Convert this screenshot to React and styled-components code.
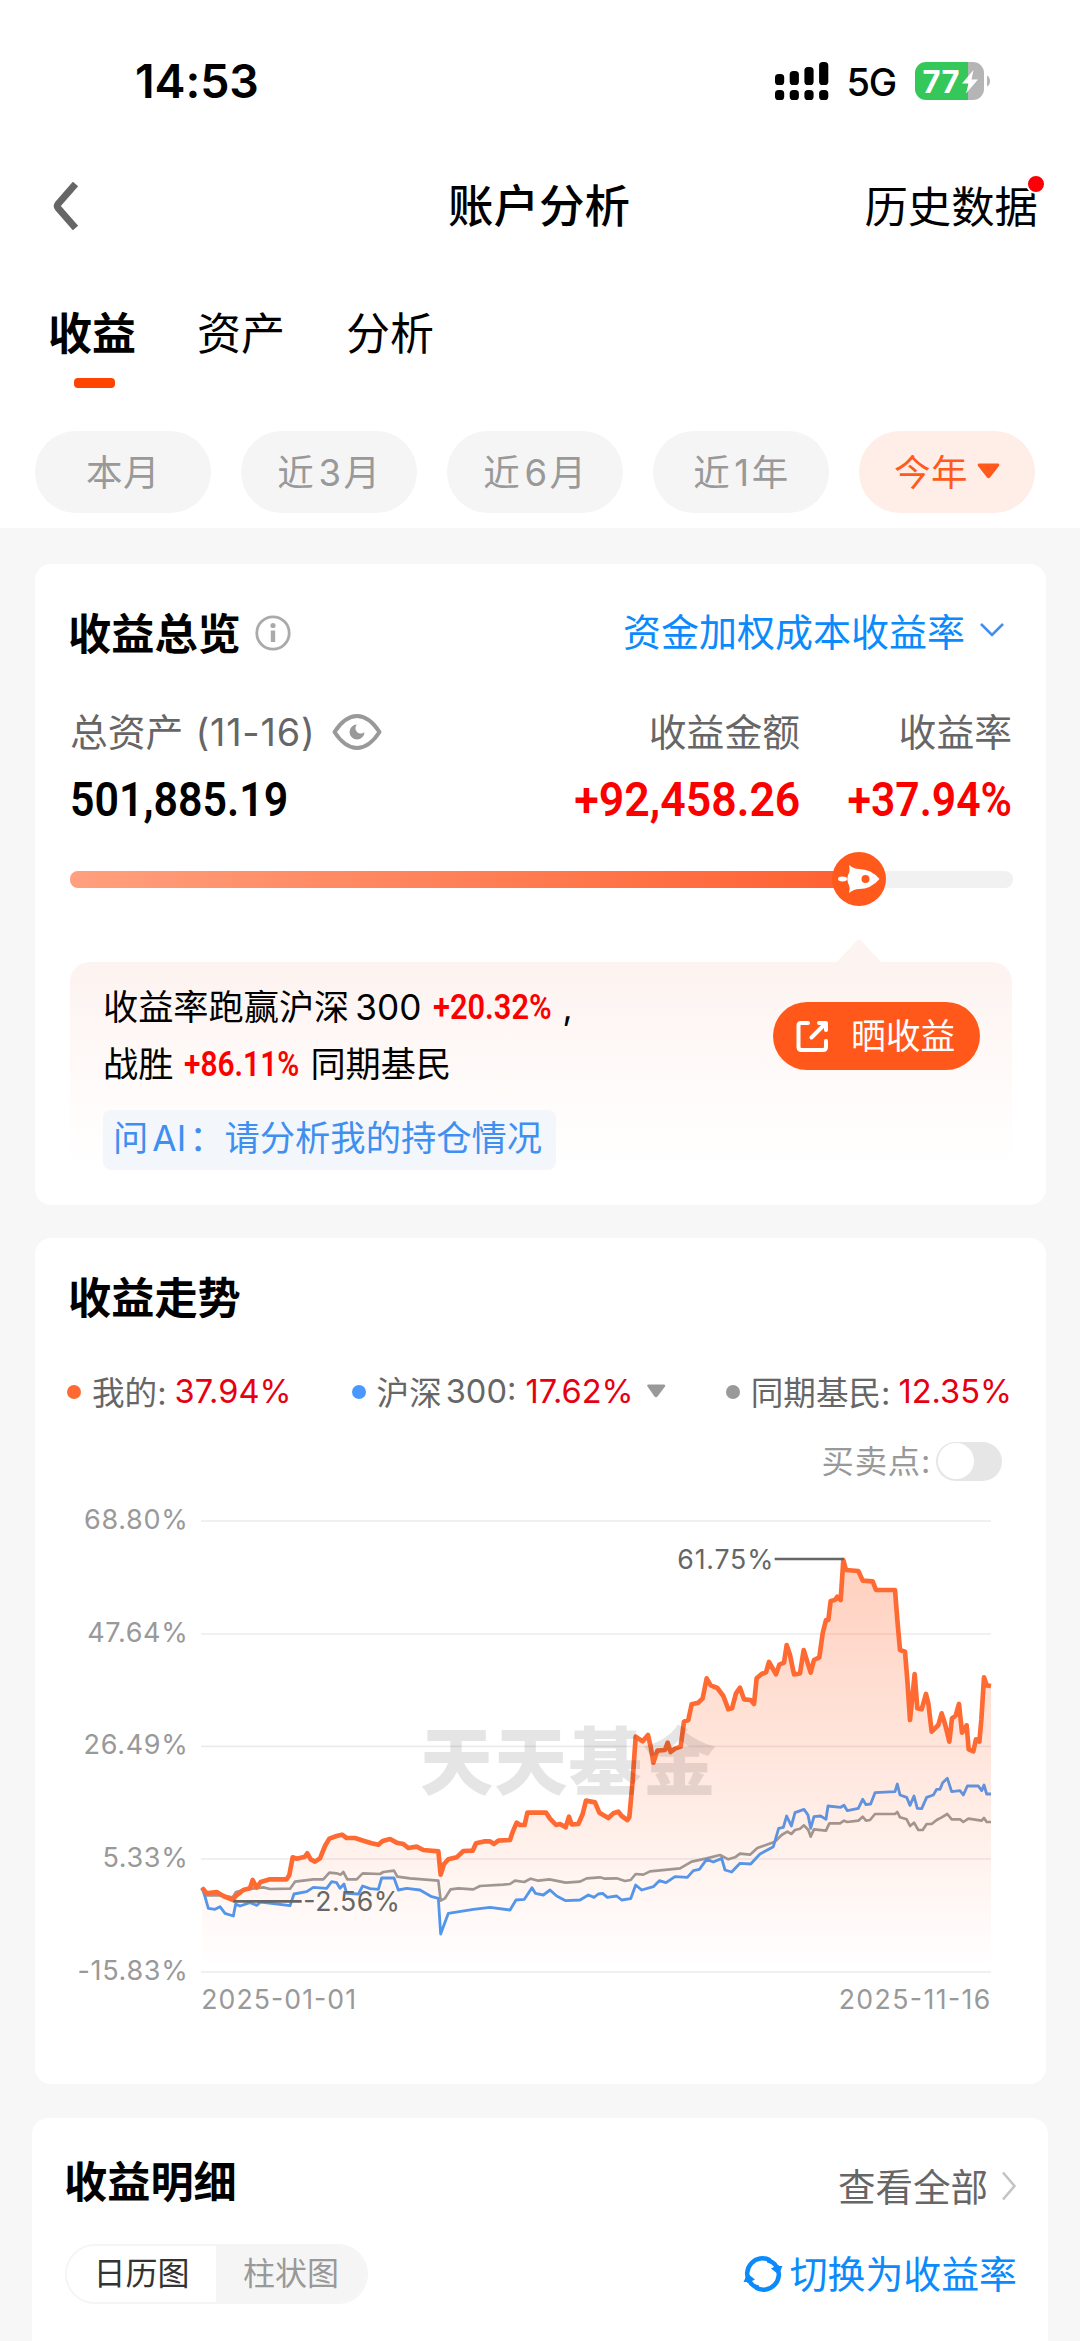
import styled, { createGlobalStyle } from "styled-components"

const GlobalStyle = createGlobalStyle`
    * {
        box-sizing: border-box;
    }
    body {
        margin: 0;
        background-color: #f7f7f7;
        font-family: Inter, "Noto Sans CJK SC", sans-serif;
        color: #000;
    }
`;

const Page = styled.div`
    width: 1080px;
    height: 2341px;
    overflow: hidden;
    background-color: #f7f7f7;
    white-space: nowrap;
`;
const Top = styled.div`
    height: 528px;
    background-color: #fff;
`;
const StatusBar = styled.div`
    height: 162px;
    padding: 0px 90px 0px 135px;
    display: flex;
    align-items: center;
    justify-content: space-between;
`;
const Time = styled.span`
    font-size: 46.5px;
    font-weight: 600;
    letter-spacing: -0.1px;
`;
const StatusRight = styled.div`
    display: flex;
    align-items: center;
`;
const Network = styled.span`
    margin: 2px 19px 0px 18px;
    font-size: 38px;
    font-weight: 500;
    letter-spacing: -1.2px;
`;
const NavBar = styled.div`
    height: 88px;
    padding: 0px 42px 0px 43px;
    display: grid;
    grid-template-columns: 1fr auto 1fr;
    align-items: center;
`;
const BackIcon = styled.svg`
    margin-left: 9px;
`;
const NavTitle = styled.h1`
    margin: 0px 3px 0px 0px;
    padding-bottom: 6px;
    font-size: 45.5px;
    font-weight: 500;
`;
const NavLink = styled.span`
    position: relative;
    justify-self: end;
    padding-bottom: 4px;
    font-size: 43.4px;
`;
const RedDot = styled.i`
    position: absolute;
    top: 1px;
    right: -8px;
    width: 20px;
    height: 20px;
    border-radius: 50%;
    border: 2px solid #fff;
    background-color: #fb0007;
`;
const Tabs = styled.div`
    height: 138px;
    padding: 40px 0px 0px 48px;
    display: flex;
    gap: 61px;
`;
const Tab = styled.div`
    display: flex;
    flex-direction: column;
    align-items: center;
    font-size: 44px;
    line-height: 88px;
    font-weight: ${props=>props.$active ? 700 : 400};
`;
const TabLine = styled.i`
    width: 41px;
    height: 10px;
    margin-left: 5px;
    border-radius: 4px;
    background-color: #ff4400;
`;
const Periods = styled.div`
    padding: 43px 0px 0px 35px;
    display: flex;
    gap: 30px;
`;
const Period = styled.div`
    width: 176px;
    height: 82px;
    padding-bottom: 3px;
    border-radius: 41px;
    display: flex;
    align-items: center;
    justify-content: center;
    gap: 9px;
    font-size: 36.5px;
    letter-spacing: 0.6px;
    color: ${props=>props.$active ? "#ff5a1c" : "#999"};
    background-color: ${props=>props.$active ? "#ffeee8" : "#f5f5f5"};
`;
const Latin = styled.span`
    margin: 0px ${props=>props.$right || 3}px 0px ${props=>props.$left || 4}px;
`;
const Card = styled.section`
    width: ${props=>props.$wide ? 1016 : 1011}px;
    height: ${props=>props.$height}px;
    margin: ${props=>props.$top}px 0px 0px ${props=>props.$wide ? 32 : 35}px;
    padding: 0px ${props=>props.$wide ? 31 : 34}px 0px ${props=>props.$wide ? 34 : 35}px;
    border-radius: 16px;
    background-color: #fff;
`;
const CardHead = styled.div`
    height: ${props=>props.$height}px;
    display: flex;
    align-items: center;
    justify-content: space-between;
`;
const CardTitle = styled.h2`
    margin: 0px 0px 0px -2px;
    padding-bottom: 5px;
    display: flex;
    align-items: center;
    gap: 14px;
    font-size: 43.2px;
    font-weight: 700;

    svg {
        margin-top: 4px;
    }
`;
const MethodLink = styled.span`
    display: flex;
    align-items: center;
    gap: 14px;
    margin-right: 7px;
    padding-bottom: 7px;
    font-size: 38px;
    color: #0b8bfb;
`;
const Stats = styled.div`
    display: flex;
    height: 134px;
`;
const Stat = styled.div`
    display: flex;
    flex-direction: column;
    flex: ${props=>props.$grow ? 1 : "none"};
    width: ${props=>props.$width ? props.$width + "px" : "auto"};
    align-items: ${props=>props.$grow ? "flex-start" : "flex-end"};
`;
const StatLabel = styled.div`
    height: 60px;
    padding-bottom: 6px;
    display: flex;
    align-items: center;
    gap: 16px;
    font-size: 37.8px;
    color: #666;

    svg {
        margin-top: 5px;
    }
`;
const DateRange = styled.span`
    margin-left: 12px;
    letter-spacing: 0.8px;
`;
const StatValue = styled.div`
    height: 74px;
    line-height: 75px;
    font-family: Roboto, sans-serif;
    font-size: 49px;
    font-weight: 600;
    color: ${props=>props.$red ? "#fc0000" : "#000"};
    transform: scaleX(${props=>props.$scale});
    transform-origin: ${props=>props.$red ? "right" : "left"};
`;
const Track = styled.div`
    height: 17px;
    margin-top: 35px;
    width: 943px;
    border-radius: 8px;
    background-color: #f1f1f1;
    position: relative;
`;
const TrackFill = styled.div`
    width: 789px;
    height: 17px;
    border-radius: 8px 0px 0px 8px;
    background-image: linear-gradient(90deg, #ffa07e, #ff6030);
`;
const Thumb = styled.svg`
    position: absolute;
    left: 762px;
    top: -19px;
`;
const Callout = styled.div`
    position: relative;
    height: 206px;
    margin-top: 74px;
    padding: 17px 32px 0px 33px;
    border-radius: 20px;
    background-image: linear-gradient(180deg, #fdf3f0, #fffdfc 78%, #fff);
    display: flex;
    justify-content: space-between;
`;
const Pointer = styled.svg`
    position: absolute;
    left: 766px;
    top: -23px;
`;
const Summary = styled.p`
    margin: 0;
    font-size: 35.2px;
    line-height: 57px;
`;
const Rate = styled.b`
    display: inline-block;
    width: ${props=>props.$width}px;
    margin: 0px 9px 0px 11px;
    font-family: Roboto, sans-serif;
    font-weight: 600;
    color: #fc0000;
    line-height: 50px;

    span {
        display: inline-block;
        transform: translateY(-1px) scaleX(${props=>props.$scale});
        transform-origin: left;
    }
`;
const AskAi = styled.div`
    display: inline-block;
    height: 60px;
    margin-top: 17px;
    padding: 0px 14px 0px 10px;
    border-radius: 8px;
    background-color: #f3f6fb;
    font-size: 35.3px;
    line-height: 57px;
    color: #3f8ff0;
`;
const ShareButton = styled.button`
    width: 207px;
    height: 68px;
    margin-top: 23px;
    padding: 0px 0px 4px 23px;
    border: none;
    border-radius: 34px;
    background-color: #ff581a;
    color: #fff;
    display: flex;
    align-items: center;
    gap: 22px;
    font-family: inherit;
    font-size: 34.8px;

    svg {
        margin-top: 4px;
    }
`;
const Legend = styled.div`
    height: 72px;
    margin-left: -3px;
    display: flex;
    align-items: center;
    justify-content: space-between;
    font-size: 32.6px;
    color: #666;
`;
const LegendItem = styled.div`
    display: flex;
    align-items: center;
    padding-bottom: 3px;
`;
const Dot = styled.i`
    width: 14px;
    height: 14px;
    margin: 3px 11px 0px 0px;
    border-radius: 50%;
    background-color: ${props=>props.color};
`;
const LegendValue = styled.span`
    margin-left: 8px;
    color: #e60012;
`;
const TradeRow = styled.div`
    height: 66px;
    padding: 0px 10px 4px 0px;
    display: flex;
    align-items: center;
    justify-content: flex-end;
    font-size: 32.3px;
    letter-spacing: 0.8px;
    color: #999;
`;
const Toggle = styled.div`
    width: 66px;
    height: 39px;
    margin: 4px 0px 0px 5px;
    padding: 1.5px;
    border-radius: 20px;
    background-color: #e6e6e6;

    i {
        display: block;
        width: 36px;
        height: 36px;
        border-radius: 50%;
        background-color: #fff;
    }
`;
const Chart = styled.svg`
    display: block;
    margin-top: 6px;
`;
const MoreLink = styled.span`
    display: flex;
    align-items: center;
    gap: 13px;
    padding-top: 6px;
    font-size: 37.5px;
    color: #666;

    svg {
        margin-top: 3px;
    }
`;
const Segment = styled.div`
    display: flex;
    width: 303px;
    height: 60px;
    margin-left: -1px;
    border: 2px solid #f5f5f5;
    border-radius: 30px;
    overflow: hidden;
`;
const SegmentItem = styled.div`
    flex: ${props=>props.$active ? "0 0 149px" : 1};
    line-height: 55px;
    text-align: center;
    font-size: 32px;
    color: ${props=>props.$active ? "#333" : "#999"};
    background-color: ${props=>props.$active ? "#fff" : "#f5f5f5"};
`;
const SwitchLink = styled.span`
    display: flex;
    align-items: center;
    gap: 7px;
    padding-bottom: 6px;
    font-size: 37.9px;
    color: #0b8bfb;

    svg {
        margin-top: 5px;
    }
`;

const signal = [73, 70, 66, 61]
const periods = [["", "本", "月"], ["3", "近", "月"], ["6", "近", "月"], ["1", "近", "年"]]
const gridLines = [
    { y: -57, label: "68.80%" },
    { y: 282, label: "47.64%" },
    { y: 619, label: "26.49%" },
    { y: 957, label: "5.33%" },
    { y: 1296, label: "-15.83%" },
]

// chart units are a third of a pixel
const mine = "36,1043 50,1060 80,1056 100,1068 130,1080 135,1070 160,1050 180,1045 188,1020 200,1043 212,1026 240,1018 290,1018 298,1005 308,952 320,956 345,950 352,940 362,958 375,965 390,955 405,918 418,896 440,888 456,884 470,894 495,894 520,902 545,910 565,914 578,903 600,897 620,908 640,912 655,924 680,920 700,930 745,934 752,1004 762,972 775,958 800,952 820,933 848,932 858,910 885,904 900,904 912,912 925,902 960,900 968,876 980,848 990,855 1004,855 1012,818 1068,818 1080,836 1098,855 1110,852 1127,862 1137,830 1145,853 1165,852 1178,822 1188,782 1215,787 1228,818 1255,834 1270,820 1285,815 1295,828 1312,840 1318,832 1328,722 1337,590 1358,604 1374,585 1382,620 1390,668 1402,632 1425,630 1433,608 1442,636 1455,626 1472,620 1482,545 1495,540 1505,493 1525,488 1538,475 1550,415 1562,436 1582,444 1600,468 1615,508 1626,505 1638,460 1650,443 1662,478 1682,480 1692,492 1700,415 1715,402 1728,397 1737,366 1758,403 1768,374 1782,368 1790,315 1800,345 1812,403 1830,400 1841,330 1862,398 1872,360 1888,352 1898,280 1908,240 1915,240 1922,183 1935,180 1942,170 1952,180 1960,60 1968,90 2005,93 2018,122 2048,124 2058,150 2115,150 2122,240 2130,330 2145,335 2152,420 2160,540 2174,402 2182,505 2195,508 2208,462 2215,490 2225,575 2245,555 2255,520 2265,552 2278,605 2286,535 2297,527 2307,492 2316,578 2330,556 2336,628 2350,634 2358,598 2368,605 2374,540 2382,412 2390,436 2403,438"
const hs300 = "36,1043 45,1070 55,1105 75,1108 90,1100 105,1120 130,1128 137,1092 150,1098 180,1088 200,1096 212,1086 300,1097 312,1062 350,1055 370,1042 410,1045 425,1025 440,1028 450,1045 462,1032 470,1060 505,1062 518,1038 540,1046 565,1048 575,1014 612,1014 625,1050 650,1045 690,1050 725,1070 745,1075 752,1182 775,1120 850,1108 900,1102 960,1110 978,1080 1003,1078 1026,1043 1036,1060 1060,1065 1080,1050 1100,1068 1127,1082 1170,1080 1195,1065 1212,1072 1225,1062 1238,1060 1252,1072 1280,1068 1295,1080 1322,1076 1337,1035 1355,1050 1390,1040 1408,1022 1428,1028 1455,1010 1492,1012 1510,992 1528,988 1550,958 1570,966 1595,955 1605,990 1625,996 1650,970 1682,972 1710,942 1750,920 1766,865 1780,862 1790,828 1804,858 1815,818 1842,808 1854,825 1862,865 1872,830 1892,828 1908,838 1914,798 1952,802 1962,796 1972,812 2005,805 2018,778 2028,794 2042,792 2055,758 2115,755 2122,732 2130,765 2150,772 2160,796 2172,768 2182,805 2195,806 2210,772 2230,765 2240,748 2250,748 2258,728 2272,715 2285,755 2310,752 2320,765 2332,738 2365,738 2375,752 2382,735 2390,762 2403,762"
const peers = "36,1043 50,1066 90,1066 128,1072 138,1056 160,1050 200,1044 220,1042 240,1047 300,1046 315,1025 370,1018 400,1018 418,998 440,1000 452,1004 460,996 472,1018 500,1018 518,1000 570,1002 580,996 612,992 622,1010 660,1015 745,1022 752,1082 765,1075 782,1048 805,1045 850,1048 870,1038 940,1034 960,1032 975,1022 1003,1026 1022,1016 1045,1022 1078,1018 1127,1028 1170,1025 1190,1015 1230,1012 1245,1016 1280,1015 1305,1023 1322,1020 1337,1002 1360,1004 1380,994 1470,985 1505,965 1550,955 1590,945 1615,958 1635,952 1650,941 1680,944 1702,924 1755,905 1775,885 1792,875 1804,882 1815,870 1830,866 1842,856 1855,870 1862,890 1872,868 1908,872 1918,850 1950,850 1962,842 1972,846 2005,842 2018,830 2028,842 2040,840 2055,822 2115,822 2122,816 2130,832 2150,838 2160,858 2172,848 2185,870 2198,870 2210,852 2225,852 2240,840 2255,832 2272,822 2285,838 2310,838 2320,846 2335,836 2375,842 2382,834 2390,846 2403,846"

const Signal = () => (
    <svg width="54" height="38" viewBox="775 61 54 38">
        {signal.map((top, i) => (
            <g key={top}>
                <rect x={775 + i * 14.7} y={top} width="9.2" height={84 - top} rx="3.6" />
                <rect x={775 + i * 14.7} y="89" width="9.2" height="10" rx="3.6" />
            </g>
        ))}
    </svg>
)

const Battery = () => (
    <svg width="75" height="38" viewBox="0 0 75 38">
        <path d="M11 0H53V38H11A11 11 0 0 1 0 27V11A11 11 0 0 1 11 0Z" fill="#34c759" />
        <path d="M53 0H58A11 11 0 0 1 69 11V27A11 11 0 0 1 58 38H53Z" fill="#b5b5b5" />
        <path d="M72 13.5Q75 15 75 19Q75 23 72 24.5Z" fill="#b5b5b5" />
        <text x="7.5" y="30.5" fontSize="31" fontWeight="700" fontFamily="Inter" textLength="37" fill="#fff">77</text>
        <path d="M58.500 8L47 21.500H53.500L51 31.500L63 17.500H56.500Z" fill="#fff" />
    </svg>
)

const EarningsChart = () => (
    <Chart width="942" height="520" viewBox="-360 -120 2826 1560" fontFamily="Inter" fontSize="80">
        <defs>
            <linearGradient id="area" gradientUnits="userSpaceOnUse" x1="0" y1="60" x2="0" y2="1280">
                <stop offset="0" stopColor="#ff6a33" stopOpacity="0.32" />
                <stop offset="1" stopColor="#ff6a33" stopOpacity="0" />
            </linearGradient>
        </defs>
        {gridLines.map((line) => (
            <g key={line.label}>
                <path d={`M33 ${line.y}H2403`} stroke="#ebebeb" strokeWidth="5" />
                <text x="-5" y={line.y + 23} textAnchor="end" fontSize="81" letterSpacing="2" fill="#999">{line.label}</text>
            </g>
        ))}
        <g fill="none" strokeLinejoin="round">
            <polyline points={peers} stroke="#999" strokeWidth="8" />
            <polyline points={hs300} stroke="#4a98f5" strokeWidth="8.500" />
            <polygon points={`36,1290 ${mine} 2403,1290`} fill="url(#area)" />
            <polyline points={mine} stroke="#ff6a33" strokeWidth="14" />
            <path d="M130 1084H335M1754 57H1962" stroke="#666" strokeWidth="8" />
        </g>
        <text x="340" y="1114" textLength="290" fill="#666">-2.56%</text>
        <text x="1462" y="87" textLength="288" fill="#666">61.75%</text>
        <text x="690" y="747" fontSize="220" fontWeight="900" textLength="888" fontFamily="'Noto Sans CJK SC'" fill="#000" fillOpacity="0.1">天天基金</text>
        <text x="34" y="1408" textLength="464" fill="#999">2025-01-01</text>
        <text x="2401" y="1408" textLength="455" textAnchor="end" fill="#999">2025-11-16</text>
    </Chart>
)

const App = () => {
  return (
    <Page>
        <GlobalStyle/>
        <Top>
            <StatusBar>
                <Time>14:53</Time>
                <StatusRight>
                    <Signal/>
                    <Network>5G</Network>
                    <Battery/>
                </StatusRight>
            </StatusBar>
            <NavBar>
                <BackIcon width="27" height="48" viewBox="0 0 27 48" fill="none" stroke="#666" strokeWidth="7">
                    <path d="M23.500 2L6 22Q4.500 24 6 26L23.500 46" strokeLinejoin="round" />
                </BackIcon>
                <NavTitle>账户分析</NavTitle>
                <NavLink>历史数据<RedDot/></NavLink>
            </NavBar>
            <Tabs>
                <Tab $active>收益<TabLine/></Tab>
                <Tab>资产</Tab>
                <Tab>分析</Tab>
            </Tabs>
            <Periods>
                {periods.map(([num, before, after]) => (
                    <Period key={before + num}>
                        <span>{before}{num && <Latin $right={2}>{num}</Latin>}{after}</span>
                    </Period>
                ))}
                <Period $active>
                    今年
                    <svg width="23" height="16" viewBox="0 0 23 16"><path d="M2 0.500H21Q23 1 22 3L13 14.500Q11.500 16 10 14.500L1 3Q0 1 2 0.500Z" fill="#ff5a1c" /></svg>
                </Period>
            </Periods>
        </Top>

        <Card $height={641} $top={36}>
            <CardHead $height={138}>
                <CardTitle>
                    收益总览
                    <svg width="36" height="36" viewBox="0 0 36 36">
                        <circle cx="18" cy="18" r="16.200" fill="none" stroke="#aaa" strokeWidth="2.800" />
                        <circle cx="18" cy="10.500" r="2.600" fill="#aaa" />
                        <path d="M18 15.500V27" stroke="#aaa" strokeWidth="4.400" />
                    </svg>
                </CardTitle>
                <MethodLink>
                    资金加权成本收益率
                    <svg width="26" height="16" viewBox="0 0 26 16" fill="none" stroke="#3f8ff0" strokeWidth="2.600"><path d="M2 2L13 13L24 2" /></svg>
                </MethodLink>
            </CardHead>
            <Stats>
                <Stat $grow>
                    <StatLabel>
                        <span>总资产<DateRange>(11-16)</DateRange></span>
                        <svg width="50" height="36" viewBox="0 0 50 36">
                            <path d="M2.500 18Q13 2 25 2T47.500 18Q37 34 25 34T2.500 18Z" fill="none" stroke="#999" strokeWidth="4" strokeLinejoin="round" />
                            <path d="M25 10.500A7.500 7.500 0 1 0 32.500 18A5 5 0 0 1 25 10.500Z" fill="#999" />
                        </svg>
                    </StatLabel>
                    <StatValue $scale={0.875}>501,885.19</StatValue>
                </Stat>
                <Stat>
                    <StatLabel>收益金额</StatLabel>
                    <StatValue $red $scale={0.91}>+92,458.26</StatValue>
                </Stat>
                <Stat $width={212}>
                    <StatLabel>收益率</StatLabel>
                    <StatValue $red $scale={0.87}>+37.94%</StatValue>
                </Stat>
            </Stats>
            <Track>
                <TrackFill/>
                <Thumb width="54" height="54" viewBox="0 0 54 54">
                    <circle cx="27" cy="27" r="27" fill="#ff5a1c" />
                    <path d="M17 13Q22 17 27 17Q39 17 47.500 27Q39 37 27 37Q22 37 17 41Q18.500 35 16 31Q14.500 27 16 23Q18.500 19 17 13Z" fill="#fff" />
                    <ellipse cx="10.500" cy="27" rx="4.500" ry="2.400" fill="#fff" />
                    <circle cx="33.500" cy="27" r="4" fill="#ff5a1c" />
                </Thumb>
            </Track>
            <Callout>
                <Pointer width="46" height="24" viewBox="0 0 46 24"><path d="M0 24L20.500 2Q23 0 25.500 2L46 24Z" fill="#fdf3f0" /></Pointer>
                <div>
                    <Summary>收益率跑赢沪深<Latin $left={6} $right={1}>300</Latin><Rate $width={120} $scale={0.875}><span>+20.32%</span></Rate>,</Summary>
                    <Summary>战胜<Rate $width={117} $scale={0.85}><span>+86.11%</span></Rate>同期基民</Summary>
                    <AskAi>问<Latin>AI</Latin>：请分析我的持仓情况</AskAi>
                </div>
                <ShareButton>
                    <svg width="33" height="33" viewBox="0 0 33 33" fill="none" stroke="#fff" strokeWidth="4" strokeLinecap="round" strokeLinejoin="round">
                        <path d="M12 3H5Q2.500 3 2.500 5.500V27Q2.500 30 5.500 30H27Q30 30 30 27V21" />
                        <path d="M15.500 17.500L28.500 4.500M23 3H30V10" />
                    </svg>
                    晒收益
                </ShareButton>
            </Callout>
        </Card>

        <Card $height={846} $top={33}>
            <CardHead $height={118}>
                <CardTitle>收益走势</CardTitle>
            </CardHead>
            <Legend>
                <LegendItem>
                    <Dot color="#ff6a33"/>我的:<LegendValue>37.94%</LegendValue>
                </LegendItem>
                <LegendItem>
                    <Dot color="#4a98ff"/>沪深<Latin $right={1}>300:</Latin><LegendValue>17.62%</LegendValue>
                    <svg width="32" height="14" viewBox="-13 0 32 14"><path d="M1 0.500H17Q19 1 18 2.500L10.500 12.500Q9 14 7.500 12.500L0.500 2.500Q-0.500 1 1 0.500Z" fill="#999" /></svg>
                </LegendItem>
                <LegendItem>
                    <Dot color="#999"/>同期基民:<LegendValue>12.35%</LegendValue>
                </LegendItem>
            </Legend>
            <TradeRow>
                买卖点:
                <Toggle><i/></Toggle>
            </TradeRow>
            <EarningsChart/>
        </Card>

        <Card $height={300} $top={34} $wide>
            <CardHead $height={126}>
                <CardTitle>收益明细</CardTitle>
                <MoreLink>
                    查看全部
                    <svg width="16" height="30" viewBox="0 0 16 30" fill="none" stroke="#c4c4c4" strokeWidth="2.600"><path d="M2 1.500L13.500 15L2 28.500" /></svg>
                </MoreLink>
            </CardHead>
            <CardHead $height={60}>
                <Segment>
                    <SegmentItem $active>日历图</SegmentItem>
                    <SegmentItem>柱状图</SegmentItem>
                </Segment>
                <SwitchLink>
                    <svg width="40" height="40" viewBox="0 0 40 40" fill="none" stroke="#0b8bfb" strokeWidth="4.500">
                        <path d="M6.500 28A15.500 15.500 0 0 1 27 6.200" />
                        <path d="M33.500 12A15.500 15.500 0 0 1 13 33.800" />
                        <path d="M24 3.500Q33 6 35.500 12L39.500 12L35.500 20.500L28 14.500L31 13Q29 9.500 24 8.500Z" fill="#0b8bfb" stroke="none" />
                        <path d="M16 36.500Q7 34 4.500 28L0.500 28L4.500 19.500L12 25.500L9 27Q11 30.500 16 31.500Z" fill="#0b8bfb" stroke="none" />
                    </svg>
                    切换为收益率
                </SwitchLink>
            </CardHead>
        </Card>
    </Page>
  )
}

export default App
